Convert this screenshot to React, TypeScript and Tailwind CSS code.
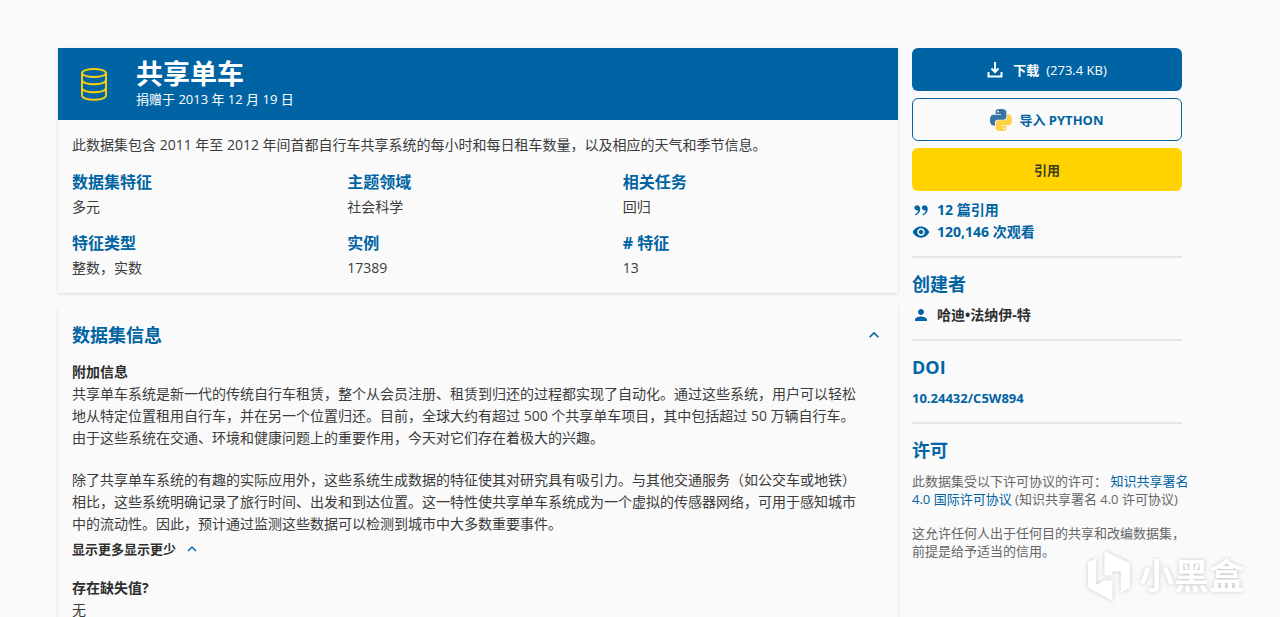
import type { ReactNode } from 'react'
import { MdExpandLess, MdPerson, MdVisibility } from 'react-icons/md'
import { RiDoubleQuotesR } from 'react-icons/ri'

const FACTS = [
  { label: '数据集特征', value: '多元' },
  { label: '主题领域', value: '社会科学' },
  { label: '相关任务', value: '回归' },
  { label: '特征类型', value: '整数，实数' },
  { label: '实例', value: '17389' },
  { label: '# 特征', value: '13' },
]

// one snake; the other is the same shape turned half way round
const PYTHON_HALF =
  'M14.25.18l.9.2.73.26.59.3.45.32.34.34.25.34.16.33.1.3.04.26.02.2-.01.13V8.5l-.05.63-.13.55-.21.46-.26.38-.3.31-.33.25-.35.19-.35.14-.33.1-.3.07-.26.04-.21.02H8.77l-.69.05-.59.14-.5.22-.41.27-.33.32-.27.35-.2.36-.15.37-.1.35-.07.32-.04.27-.02.21v3.06H3.17l-.21-.03-.28-.07-.32-.12-.35-.18-.36-.26-.36-.36-.35-.46-.32-.59-.28-.73-.21-.88-.14-1.05-.05-1.23.06-1.22.16-1.04.24-.87.32-.71.36-.57.4-.44.42-.33.42-.24.4-.16.36-.1.32-.05.24-.01h.16l.06.01h8.16v-.83H6.18l-.01-2.75-.02-.37.05-.34.11-.31.17-.28.25-.26.31-.23.38-.2.44-.18.51-.15.58-.12.64-.1.71-.06.77-.04.84-.02 1.27.05zm-6.3 1.98l-.23.33-.08.41.08.41.23.34.33.22.41.09.41-.09.33-.22.23-.34.08-.41-.08-.41-.23-.33-.33-.22-.41-.09-.41.09z'

function DatabaseIcon() {
  return (
    <svg viewBox="0 0 26 33" className="h-[33px] w-[26px]" fill="none" stroke="#f5cc10" strokeWidth="2" aria-hidden="true">
      <ellipse cx="13" cy="5" rx="12" ry="4" />
      <path d="M1 5v22.5c0 2.500 5.400 4.300 12 4.300s12-1.800 12-4.300V5" />
      <path d="M1 12c0 2.500 5.400 4.300 12 4.300s12-1.800 12-4.300M1 20c0 2.500 5.400 4.300 12 4.300s12-1.800 12-4.300" />
    </svg>
  )
}

function DownloadIcon() {
  return (
    <svg viewBox="0 0 16 16" className="size-4" fill="none" stroke="currentColor" strokeWidth="2" aria-hidden="true">
      <path d="M8 0v10M4.500 6.500L8 10l3.500-3.500" />
      <path d="M1.500 10v4.500h13V10" />
    </svg>
  )
}

function PythonIcon() {
  return (
    <svg viewBox="0 0 24 24" className="size-[22px]" aria-hidden="true">
      <path d={PYTHON_HALF} fill="#3a74a6" />
      <path d={PYTHON_HALF} fill="#ffd043" transform="rotate(180 12 12)" />
    </svg>
  )
}

function Watermark() {
  return (
    <div className="pointer-events-none absolute top-[550px] right-9 flex items-center gap-2 text-white drop-shadow-[0_0_2px_#00000033]">
      <svg viewBox="0 0 43 51" className="h-[52px] w-11" fill="currentColor" aria-hidden="true">
        <path d="M1 12l8-4v26l8-4h8v20L1 37z" />
        <path d="M17 1l25 12v24l-9 5V21h-8v4h-8z" />
      </svg>
      <span className="text-[35px] leading-[52px] font-bold">小黑盒</span>
    </div>
  )
}

function SideSection({ title, children }: { title: string; children: ReactNode }) {
  return (
    <section className="mt-[13px] border-t-2 border-[#e5e5e5] pt-3">
      <h2 className="text-lg leading-7 font-bold text-[#0064a4]">{title}</h2>
      {children}
    </section>
  )
}

export default function App() {
  return (
    <div className="relative h-screen overflow-hidden bg-[#fafafa] pt-12 pr-[98px] pl-[58px] font-['Open_Sans','Noto_Sans_CJK_SC',sans-serif] text-sm leading-[22px] text-[#3c3c3c]">
      <div className="grid grid-cols-[28fr_9fr] items-start gap-[14px]">
        <main className="flex min-w-0 flex-col gap-[14px]">
          <section className="shadow-[0_1px_3px_#00000020]">
            <header className="flex h-[72px] items-center bg-[#0064a4] text-white">
              <div className="flex w-[72px] justify-center">
                <DatabaseIcon />
              </div>
              <div className="pb-0.5 pl-[6px]">
                <h1 className="text-[27px] leading-8 font-bold">共享单车</h1>
                <p className="text-[13px] leading-[18px]">捐赠于 2013 年 12 月 19 日</p>
              </div>
            </header>
            <div className="p-[14px]">
              <p>此数据集包含 2011 年至 2012 年间首都自行车共享系统的每小时和每日租车数量，以及相应的天气和季节信息。</p>
              <dl className="mt-[14px] grid grid-cols-3 gap-x-[14px] gap-y-[13px]">
                {FACTS.map(fact => (
                  <div key={fact.label}>
                    <dt className="pb-0.5 text-base leading-6 font-bold text-[#0064a4]">{fact.label}</dt>
                    <dd>{fact.value}</dd>
                  </div>
                ))}
              </dl>
            </div>
          </section>

          <section className="p-[14px] shadow-[0_1px_3px_#00000020]">
            <div className="flex items-center justify-between">
              <h2 className="text-lg leading-7 font-bold text-[#0064a4]">数据集信息</h2>
              <button type="button" aria-label="收起" className="text-xl text-[#0064a4]"><MdExpandLess /></button>
            </div>
            <h3 className="mt-3 font-bold text-[#2e2e2e]">附加信息</h3>
            <p className="whitespace-nowrap">
              共享单车系统是新一代的传统自行车租赁，整个从会员注册、租赁到归还的过程都实现了自动化。通过这些系统，用户可以轻松<br />
              地从特定位置租用自行车，并在另一个位置归还。目前，全球大约有超过 500 个共享单车项目，其中包括超过 50 万辆自行车。<br />
              由于这些系统在交通、环境和健康问题上的重要作用，今天对它们存在着极大的兴趣。
            </p>
            <p className="mt-5 whitespace-nowrap">
              除了共享单车系统的有趣的实际应用外，这些系统生成数据的特征使其对研究具有吸引力。与其他交通服务（如公交车或地铁）<br />
              相比，这些系统明确记录了旅行时间、出发和到达位置。这一特性使共享单车系统成为一个虚拟的传感器网络，可用于感知城市<br />
              中的流动性。因此，预计通过监测这些数据可以检测到城市中大多数重要事件。
            </p>
            <button type="button" className="mt-1 flex items-center gap-[7px] text-[13px] leading-5 font-bold text-[#2e2e2e]">
              显示更多显示更少
              <MdExpandLess className="text-lg text-[#0064a4]" />
            </button>
            <h3 className="mt-[18px] font-bold text-[#2e2e2e]">存在缺失值?</h3>
            <p>无</p>
          </section>
        </main>

        <aside className="min-w-0">
          <div className="flex flex-col gap-[7px] text-[13px] leading-5 font-bold">
            <button type="button" className="flex h-[43px] items-center justify-center rounded-md bg-[#0064a4] text-white">
              <DownloadIcon />
              <span className="ml-[10px]">下载</span>
              <span className="ml-[7px] font-normal">(273.4 KB)</span>
            </button>
            <button type="button" className="flex h-[43px] items-center justify-center gap-[7px] rounded-md border border-[#0064a4] text-[#0064a4]">
              <PythonIcon />
              导入 PYTHON
            </button>
            <button type="button" className="h-[43px] rounded-md bg-[#ffd200] text-[#3c3c20]">引用</button>
          </div>
          <ul className="mt-2 font-bold text-[#0064a4]">
            <li className="flex items-center gap-[7px]"><RiDoubleQuotesR className="size-[18px]" />12 篇引用</li>
            <li className="flex items-center gap-[7px]"><MdVisibility className="size-[18px]" />120,146 次观看</li>
          </ul>

          <SideSection title="创建者">
            <p className="mt-[6px] flex items-center gap-[7px] font-bold text-[#2e2e2e]">
              <MdPerson className="size-[18px] text-[#0064a4]" />
              哈迪•法纳伊-特
            </p>
          </SideSection>
          <SideSection title="DOI">
            <a href="#doi" className="mt-[6px] block text-[13px] font-bold text-[#0064a4]">10.24432/C5W894</a>
          </SideSection>
          <SideSection title="许可">
            <div className="mt-2 text-[13px] leading-[18px] whitespace-nowrap text-[#666]">
              <p>
                此数据集受以下许可协议的许可：{' '}
                <a href="#license" className="text-[#0064a4]">知识共享署名<br />4.0 国际许可协议</a> (知识共享署名 4.0 许可协议)
              </p>
              <p className="mt-4">
                这允许任何人出于任何目的共享和改编数据集，<br />
                前提是给予适当的信用。
              </p>
            </div>
          </SideSection>
        </aside>
      </div>
      <Watermark />
    </div>
  )
}
